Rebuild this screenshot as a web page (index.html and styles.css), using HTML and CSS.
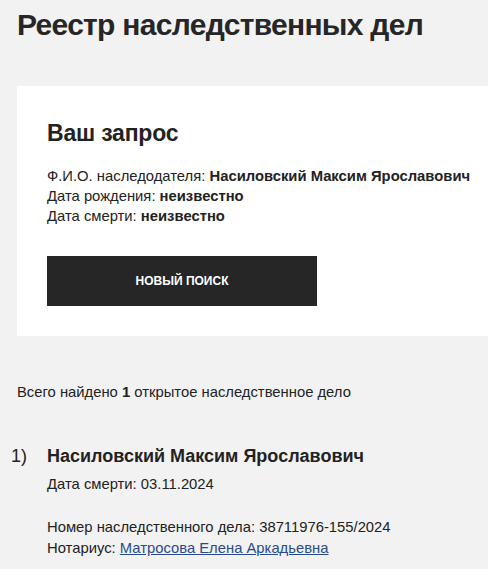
FILE: index.html
```html
<!DOCTYPE html>
<html lang="ru">
<head>
  <meta charset="UTF-8" />
  <title>Реестр наследственных дел</title>
  <link rel="stylesheet" href="styles.css">
</head>
<body>
<div class="page">
  <h1 class="page-title">Реестр наследственных дел</h1>

  <!-- запрос -->
  <div class="request-card">
    <h2 class="request-title">Ваш запрос</h2>
    <div class="request-info">
      <div>Ф.И.О. наследодателя: <b>Насиловский Максим Ярославович</b></div>
      <div>Дата рождения: <b>неизвестно</b></div>
      <div>Дата смерти: <b>неизвестно</b></div>
    </div>
    <button class="btn-search">НОВЫЙ ПОИСК</button>
  </div>

  <p class="found">Всего найдено <b>1</b> открытое наследственное дело</p>

  <!-- результаты -->
  <ol class="results">
    <li class="result">
      <span class="result-num">1)</span>
      <div class="result-body">
        <div class="result-name">Насиловский Максим Ярославович</div>
        <div class="result-date">Дата смерти: 03.11.2024</div>
        <div class="result-case">Номер наследственного дела: 38711976-155/2024</div>
        <div>Нотариус: <a href="#">Матросова Елена Аркадьевна</a></div>
      </div>
    </li>
  </ol>
</div>
</body>
</html>
```

FILE: styles.css
```css
body {
  margin: 0;
  background: #f2f2f2;
  color: #222;
  font-family: "Liberation Sans", Arial, sans-serif;
  font-size: 14.8px;
}

.page {
  padding: 0 0 0 17px;
}

.page-title {
  margin: 0;
  padding-top: 8px;
  font-size: 30px;
  line-height: 34px;
  font-weight: bold;
  letter-spacing: -0.7px;
  color: #262626;
}

.request-card {
  background: #fff;
  margin-top: 44px;
  padding: 33px 0 30px 30px;
}

.request-title {
  margin: 0;
  font-size: 23px;
  line-height: 28px;
  font-weight: bold;
  letter-spacing: -0.2px;
}

.request-info {
  margin-top: 19px;
  line-height: 20px;
  white-space: nowrap;
}

.btn-search {
  margin-top: 30px;
  width: 270px;
  height: 50px;
  border: none;
  background: #262626;
  color: #fff;
  font-family: inherit;
  font-size: 12px;
  font-weight: bold;
  cursor: pointer;
}

.found {
  margin: 46px 0 0;
  line-height: 20px;
}

.results {
  list-style: none;
  margin: 42px 0 0 -6px;
  padding: 0;
}

.result {
  display: flex;
}

.result-num {
  width: 36px;
  font-size: 18px;
  line-height: 24px;
}

.result-name {
  font-size: 18px;
  line-height: 24px;
  font-weight: bold;
}

.result-body {
  line-height: 21px;
}

.result-date {
  margin-top: 6px;
}

.result-case {
  margin-top: 22px;
}

.result-body a {
  color: #2b4a8c;
}
```
